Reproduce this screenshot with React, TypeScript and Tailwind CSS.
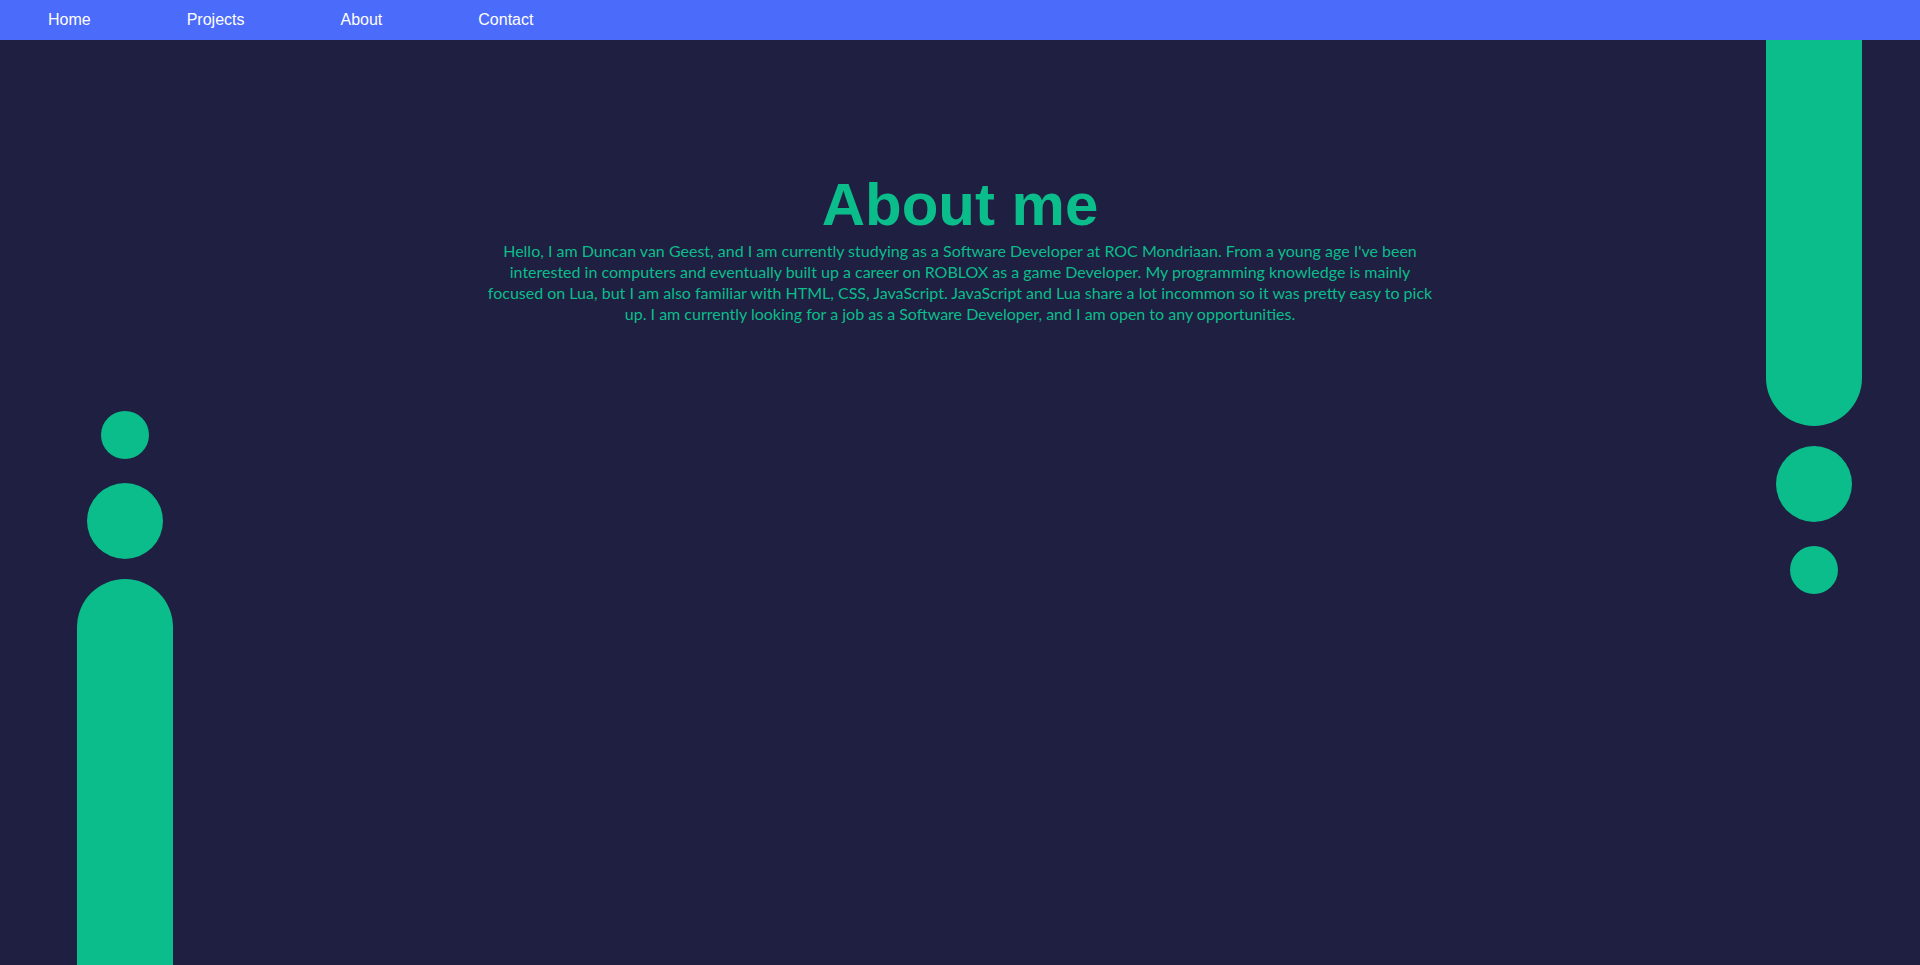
import React from 'react';

const links = ['Home', 'Projects', 'About', 'Contact'];

const lines = [
  "Hello, I am Duncan van Geest, and I am currently studying as a Software Developer at ROC Mondriaan. From a young age I've been",
  'interested in computers and eventually built up a career on ROBLOX as a game Developer. My programming knowledge is mainly',
  'focused on Lua, but I am also familiar with HTML, CSS, JavaScript. JavaScript and Lua share a lot incommon so it was pretty easy to pick',
  'up. I am currently looking for a job as a Software Developer, and I am open to any opportunities.',
];

export default function App() {
  return (
    <div className="h-screen overflow-hidden bg-[#1f1f42] flex flex-col">
      <nav className="h-[40px] shrink-0 bg-[#4b6bfb] flex items-center">
        {links.map((l) => (
          <a
            key={l}
            href="#"
            className="px-[48px] text-white text-[16px] leading-[18px] font-['Liberation_Sans',Arial,sans-serif]"
          >
            {l}
          </a>
        ))}
      </nav>

      <main className="flex-1 grid grid-cols-[1fr_960px_1fr]">
        {/* left decoration */}
        <div className="flex flex-col justify-end items-center w-[96px] ml-[77px]">
          <div className="w-[48px] h-[48px] rounded-full bg-[#0bbd8a]" />
          <div className="w-[76px] h-[76px] rounded-full bg-[#0bbd8a] mt-[24px]" />
          <div className="w-[96px] h-[386px] rounded-t-[48px] bg-[#0bbd8a] mt-[20px]" />
        </div>

        <section className="pt-[130px] text-center">
          <h1 className="text-[60px] leading-[69px] font-bold text-[#0bbd8a] font-['Liberation_Sans',Arial,sans-serif]">
            About me
          </h1>
          <p className="pt-[1px] text-[16px] leading-[21px] text-[#0bbd8a] font-['Lato',sans-serif]">
            {lines.map((t, i) => (
              <React.Fragment key={i}>
                {t}
                {i < lines.length - 1 && <br />}
              </React.Fragment>
            ))}
          </p>
        </section>

        {/* right decoration */}
        <div className="justify-self-end flex flex-col items-center w-[96px] mr-[58px]">
          <div className="w-[96px] h-[386px] rounded-b-[48px] bg-[#0bbd8a]" />
          <div className="w-[76px] h-[76px] rounded-full bg-[#0bbd8a] mt-[20px]" />
          <div className="w-[48px] h-[48px] rounded-full bg-[#0bbd8a] mt-[24px]" />
        </div>
      </main>
    </div>
  );
}
